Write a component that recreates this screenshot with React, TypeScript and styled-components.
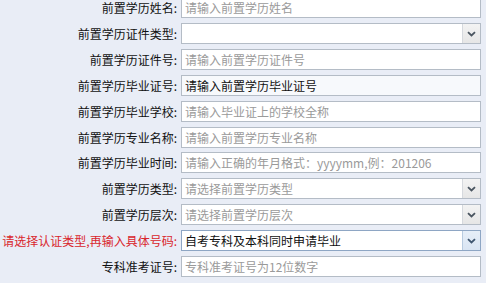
import React from "react";
import styled, { createGlobalStyle } from "styled-components";

const Global = createGlobalStyle`
  html, body { margin: 0; padding: 0; background: #e9edf6; }
  body { font-family: "Noto Sans CJK SC", "Noto Sans", sans-serif; overflow: hidden; }
`;

const Form = styled.div`
  width: 486px;
  height: 283px;
  overflow: hidden;
  background: #e9edf6;
`;

const Grid = styled.div`
  display: grid;
  grid-template-columns: 177px 300px;
  column-gap: 4px;
  row-gap: 4.9px;
  margin-top: -2.9px;
  grid-auto-rows: 21px;
  align-items: center;
`;

const Label = styled.label<{ $warn?: boolean }>`
  text-align: right;
  font-size: 12px;
  line-height: 21px;
  white-space: nowrap;
  color: ${(p) => (p.$warn ? "#d9262c" : "#111")};
  letter-spacing: 0;
`;

const TextInput = styled.input<{ $filled?: boolean }>`
  box-sizing: border-box;
  width: 300px;
  height: 21px;
  margin: 0;
  padding: 0 3px;
  border: 1px solid #b4bcc6;
  background: ${(p) => (p.$filled ? "#f7f9fc" : "#fff")};
  font-family: "Noto Sans CJK SC", "Noto Sans", sans-serif;
  font-size: 12px;
  color: #111;
  outline: none;
  &::placeholder { color: #9a9a9a; opacity: 1; }
`;

const SelectBox = styled.div<{ $focus?: boolean }>`
  box-sizing: border-box;
  width: 300px;
  height: 21px;
  display: flex;
  align-items: stretch;
  border: 1px solid ${(p) => (p.$focus ? "#8ea6c4" : "#b4bcc6")};
  background: #fff;
`;

const SelectText = styled.span<{ $placeholder?: boolean }>`
  flex: 1;
  padding: 0 3px;
  font-size: 12px;
  line-height: 19px;
  white-space: nowrap;
  overflow: hidden;
  color: ${(p) => (p.$placeholder ? "#9a9a9a" : "#111")};
`;

const Arrow = styled.span<{ $focus?: boolean }>`
  width: 17px;
  display: flex;
  align-items: center;
  justify-content: center;
  border-left: 1px solid ${(p) => (p.$focus ? "#b8cbe0" : "#d6d9de")};
  background: ${(p) =>
    p.$focus
      ? "linear-gradient(#e6eef8, #d9e5f3)"
      : "linear-gradient(#f3f3f3, #e6e6e6)"};
`;

const Chevron = ({ color }: { color: string }) => (
  <svg width="9" height="6" viewBox="0 0 9 6">
    <path d="M1 1.2 L4.5 4.5 L8 1.2" fill="none" stroke={color} strokeWidth="1.8" />
  </svg>
);

type Field =
  | { label: string; kind: "input"; placeholder?: string; value?: string; warn?: boolean }
  | { label: string; kind: "select"; text?: string; placeholder?: boolean; focus?: boolean; warn?: boolean };

const fields: Field[] = [
  { label: "前置学历姓名:", kind: "input", placeholder: "请输入前置学历姓名" },
  { label: "前置学历证件类型:", kind: "select", text: "" },
  { label: "前置学历证件号:", kind: "input", placeholder: "请输入前置学历证件号" },
  { label: "前置学历毕业证号:", kind: "input", value: "请输入前置学历毕业证号" },
  { label: "前置学历毕业学校:", kind: "input", placeholder: "请输入毕业证上的学校全称" },
  { label: "前置学历专业名称:", kind: "input", placeholder: "请输入前置学历专业名称" },
  { label: "前置学历毕业时间:", kind: "input", placeholder: "请输入正确的年月格式：yyyymm,例：201206" },
  { label: "前置学历类型:", kind: "select", text: "请选择前置学历类型", placeholder: true },
  { label: "前置学历层次:", kind: "select", text: "请选择前置学历层次", placeholder: true },
  { label: "请选择认证类型,再输入具体号码:", kind: "select", text: "自考专科及本科同时申请毕业", focus: true, warn: true },
  { label: "专科准考证号:", kind: "input", placeholder: "专科准考证号为12位数字" },
];

export default function App() {
  return (
    <Form>
      <Global />
      <Grid>
        {fields.map((f, i) => (
          <React.Fragment key={i}>
            <Label $warn={f.warn}>{f.label}</Label>
            {f.kind === "input" ? (
              <TextInput
                $filled={!!f.value}
                placeholder={f.placeholder}
                defaultValue={f.value}
              />
            ) : (
              <SelectBox $focus={f.focus}>
                <SelectText $placeholder={f.placeholder}>{f.text}</SelectText>
                <Arrow $focus={f.focus}>
                  <Chevron color={f.focus ? "#3f5670" : "#4a5560"} />
                </Arrow>
              </SelectBox>
            )}
          </React.Fragment>
        ))}
      </Grid>
    </Form>
  );
}
